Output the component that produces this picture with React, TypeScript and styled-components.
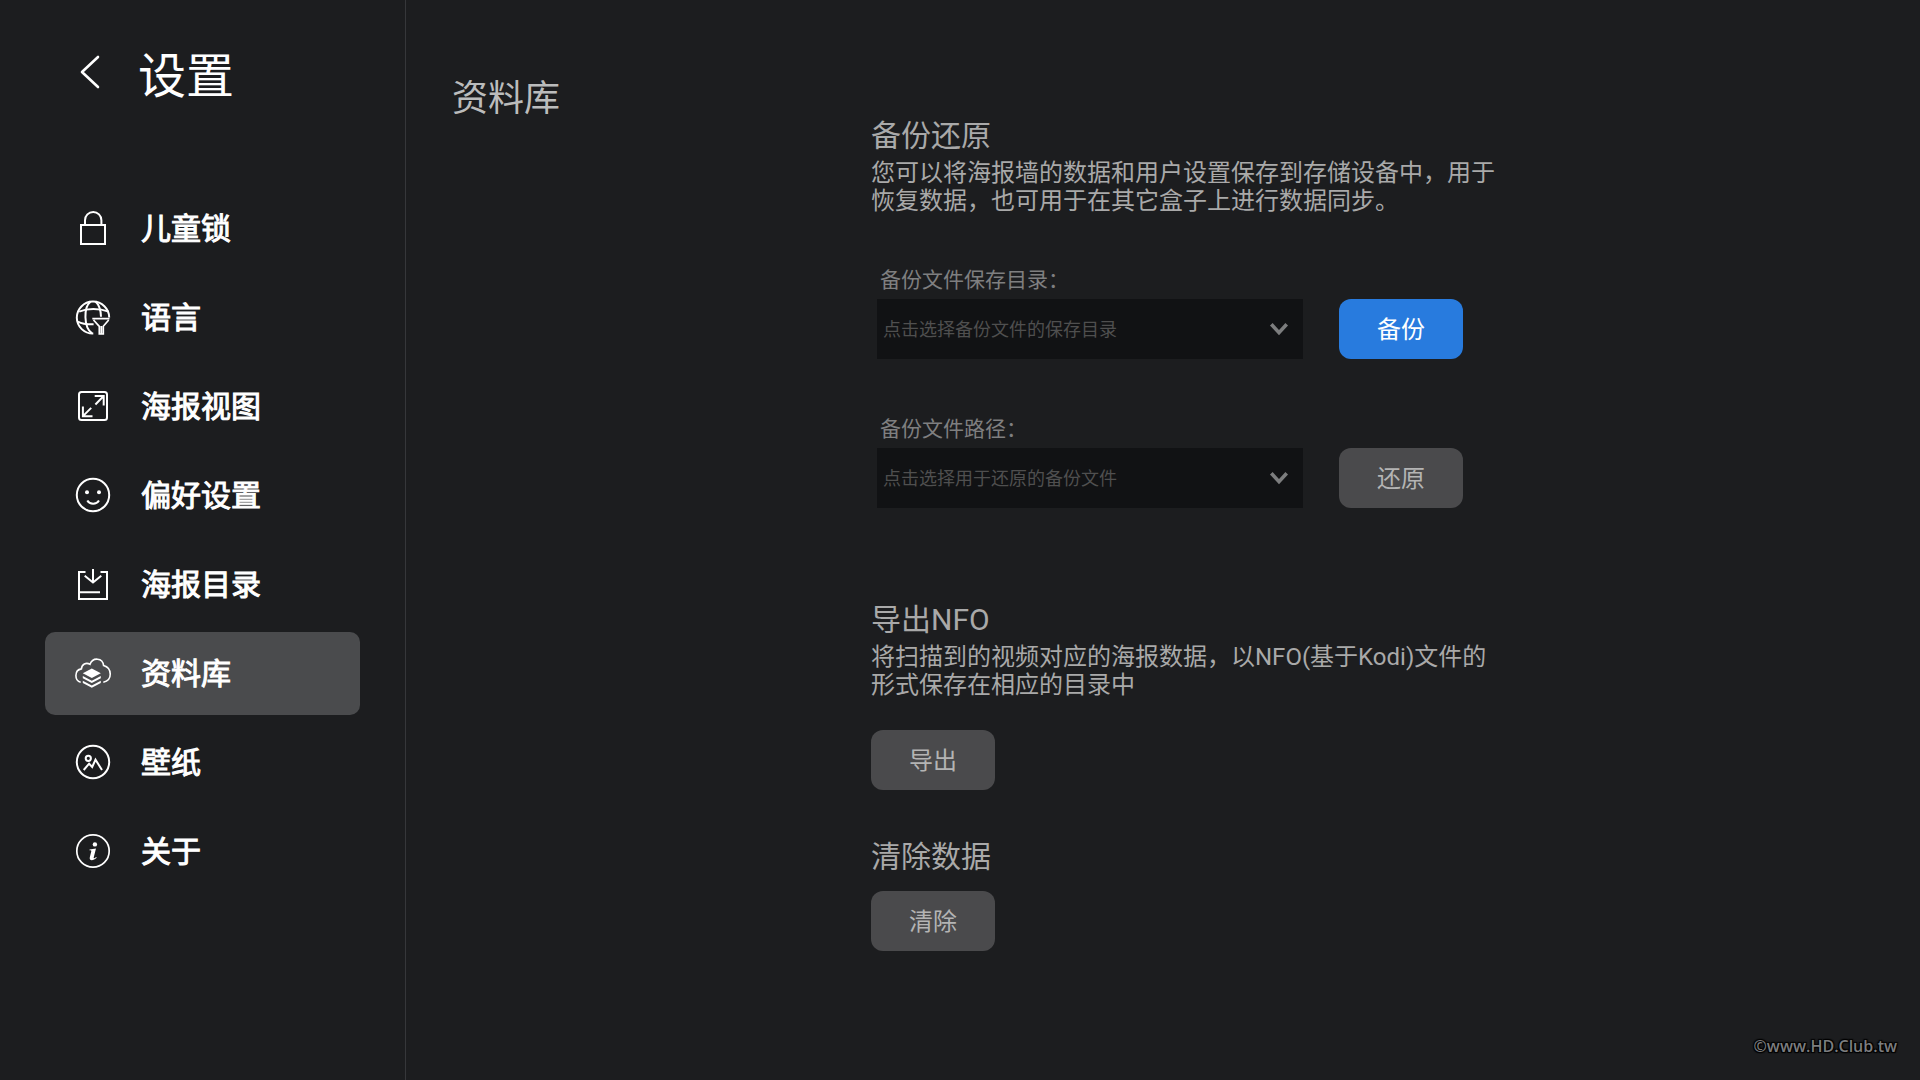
import React, { useState } from "react";
import styled, { createGlobalStyle } from "styled-components";

const GlobalStyle = createGlobalStyle`
  *, *::before, *::after { box-sizing: border-box; }
  body {
    margin: 0;
    background: #1c1d1f;
    color: #a9a9a9;
    font-family: Roboto, "Noto Sans CJK SC", sans-serif;
  }
  h1, h2, h3, p, ul { margin: 0; padding: 0; font-weight: 400; }
  button, select { font-family: inherit; }
`;

const Page = styled.div`
  position: relative;
  display: flex;
  min-height: 100vh;
`;

const Sidebar = styled.aside`
  flex: none;
  width: 406px;
  padding: 48px 45px;
  border-right: 1px solid #36373a;
`;

const SidebarHeader = styled.header`
  display: flex;
  align-items: flex-start;
  gap: 37px;
  padding-left: 34px;
  margin-bottom: 81px;
`;

const BackButton = styled.button`
  display: flex;
  align-items: center;
  height: 48px;
  padding: 0;
  border: 0;
  background: none;
  color: #fff;
  cursor: pointer;
`;

const SidebarTitle = styled.h1`
  font-size: 48px;
  line-height: 58px;
  color: #fff;
`;

const NavList = styled.ul`
  display: flex;
  flex-direction: column;
  gap: 6px;
  list-style: none;
`;

const NavLink = styled.a<{ $active: boolean }>`
  display: flex;
  align-items: center;
  gap: 29px;
  height: 83px;
  padding: 0 30px;
  border-radius: 10px;
  background: ${(p) => (p.$active ? "#4a4b4d" : "transparent")};
  color: #fff;
  font-size: 30px;
  line-height: 36px;
  text-decoration: none;
`;

const NavLabel = styled.span`
  padding-top: 1px;
  -webkit-text-stroke: 1px currentColor;
`;

const NavIcon = styled.svg`
  flex: none;
  width: 37px;
  height: 37px;
  fill: none;
  stroke: currentColor;
  stroke-width: 2;
`;

const Main = styled.main`
  flex: 1;
  display: grid;
  grid-template-columns: 419px minmax(0, 1fr);
  align-items: start;
  padding: 78px 46px;
`;

const PageTitle = styled.h2`
  font-size: 36px;
  line-height: 42px;
  color: #bbbcbc;
`;

const Sections = styled.div`
  padding-top: 40px;
`;

const Section = styled.section<{ $before?: number }>`
  margin-top: ${(p) => p.$before ?? 0}px;
`;

const SectionTitle = styled.h3`
  font-size: 30px;
  line-height: 36px;
`;

const Description = styled.p`
  max-width: 630px;
  margin-top: 5px;
  font-size: 24px;
  line-height: 28px;
`;

const Fields = styled.div`
  display: flex;
  flex-direction: column;
  gap: 56px;
  margin-top: 51px;
  padding-left: 6px;
`;

const FieldRow = styled.div`
  display: flex;
  align-items: flex-end;
  gap: 36px;
`;

const Field = styled.div`
  display: flex;
  flex-direction: column;
  gap: 5px;
  width: 426px;
`;

const FieldLabel = styled.label`
  padding-left: 3px;
  font-size: 21px;
  line-height: 28px;
  color: #7f7f80;
`;

const SelectBox = styled.div`
  display: grid;
  align-items: center;

  > * { grid-area: 1 / 1; }
`;

const Select = styled.select`
  width: 100%;
  height: 60px;
  padding: 0 60px 0 6px;
  border: 0;
  border-radius: 0;
  appearance: none;
  background: #111214;
  color: #4f4f4f;
  font-size: 18px;
`;

const SelectArrow = styled.svg`
  justify-self: end;
  width: 20px;
  height: 14px;
  margin-right: 14px;
  fill: none;
  stroke: #7c7d7e;
  stroke-width: 3.6;
  pointer-events: none;
`;

const ActionButton = styled.button<{ $primary?: boolean; $before?: number }>`
  display: block;
  width: 124px;
  height: 60px;
  margin-top: ${(p) => p.$before ?? 0}px;
  padding: 2px 0 0;
  border: 0;
  border-radius: 12px;
  background: ${(p) => (p.$primary ? "#287bde" : "#4a4a4c")};
  color: ${(p) => (p.$primary ? "#fff" : "#b4b4b4")};
  font-size: 24px;
  line-height: 28px;
  cursor: pointer;
`;

const Copyright = styled.footer`
  position: absolute;
  right: 23px;
  bottom: 22px;
  font-family: "Open Sans", "Noto Sans", sans-serif;
  font-size: 16px;
  font-weight: 600;
  line-height: 24px;
  color: #7c7d7f;
  text-shadow: 1px 1px 1px #000, -1px -1px 1px #000, 1px -1px 1px #000,
    -1px 1px 1px #000, 0 0 2px #000;
`;

const icons: Record<string, React.ReactNode> = {
  lock: (
    <>
      <rect x="6" y="15" width="24" height="19" />
      <path d="M10 14.5V10.2a8.2 8.2 0 0 1 16.4 0v4.3" />
    </>
  ),
  globe: (
    <>
      <path d="M34.2 18.5A16.2 16 0 1 0 18.3 34.6" />
      <path d="M15.500 2.600C8.500 8 8.500 28.500 17 34.400M20.500 2.600c3.300 3 5.300 8.500 5.500 15.200" />
      <path d="M4.200 12.600c8-3.400 20-3.400 29.400 0M2.900 22.600c4 2.200 9.500 2.800 15.700 2.700" />
      <path strokeWidth="1.700" d="M17.300 19.700h17.200M18.500 21l5.800 6.300V35h4v-7.700l5.400-6.300M26.300 27v8" />
    </>
  ),
  view: (
    <>
      <rect x="4" y="4" width="28" height="28" rx="2.500" />
      <path d="M19.700 7.900h9v9.600M28.400 8.200l-8 8.300M7.900 18.500v9.700h9.600M8.200 27.900l8-8" />
    </>
  ),
  smile: (
    <>
      <circle cx="18" cy="18" r="16.200" />
      <path d="M12.300 23.500c2.600 4.400 9 4.400 11.700 0" />
      <circle cx="12" cy="15.300" r="2" fill="currentColor" stroke="none" />
      <circle cx="24" cy="15.300" r="2" fill="currentColor" stroke="none" />
    </>
  ),
  folder: (
    <path d="M10.500 6H4v27h28V6h-6.500M18 3v13.500M9.700 9.800l8.300 6.700 8.300-6.700M4 26.300h21" />
  ),
  library: (
    <>
      <path
        strokeWidth="1.600"
        d="M5.700 27.200C-.6 25.500-1 15.200 6.400 13.900c.3-4.600 4.600-6.900 8.600-4.600 2.700-7.300 12.700-6.800 13.600 1.300 8.600 2.500 9.200 14.700-.3 16.600"
      />
      <g fill="currentColor" stroke="none">
        <path d="M16.800 13.600l9 4.700-9 4.700-9-4.700z" />
        <path d="M7.800 21l9 4.700 9-4.700v2.200l-9 4.700-9-4.700z" />
        <path d="M7.800 25.700l9 4.700 9-4.700v2.300l-9 4.700-9-4.700z" />
      </g>
    </>
  ),
  wallpaper: (
    <>
      <circle cx="18" cy="18" r="16.200" />
      <circle cx="13.300" cy="14.300" r="2.600" />
      <path d="M8.700 26l5.400-6.300 3.100 3.300 3.300-7.300L27 26" />
    </>
  ),
  about: (
    <>
      <circle cx="18" cy="18" r="16.200" strokeWidth="1.700" />
      <circle cx="19.900" cy="11.400" r="2.200" fill="currentColor" stroke="none" />
      <path fill="currentColor" stroke="none" d="M14.600 16.500l6.400-1-2.300 9c-.3 1.200.6 1.100 2.500-.4l.5.700c-3.400 3.200-7.800 3.200-6.900-.5l1.500-6c.2-.8-.4-1-2-1z" />
    </>
  ),
};

const menu = [
  { id: "lock", label: "儿童锁" },
  { id: "globe", label: "语言" },
  { id: "view", label: "海报视图" },
  { id: "smile", label: "偏好设置" },
  { id: "folder", label: "海报目录" },
  { id: "library", label: "资料库" },
  { id: "wallpaper", label: "壁纸" },
  { id: "about", label: "关于" },
];

interface PathFieldProps {
  id: string;
  label: string;
  placeholder: string;
  action: string;
  primary?: boolean;
}

function PathField({ id, label, placeholder, action, primary }: PathFieldProps) {
  return (
    <FieldRow>
      <Field>
        <FieldLabel htmlFor={id}>{label}</FieldLabel>
        <SelectBox>
          <Select id={id} defaultValue="">
            <option value="">{placeholder}</option>
          </Select>
          <SelectArrow viewBox="0 0 20 14" aria-hidden="true">
            <path d="M2.300 2.300L10 10.600l7.700-8.300" />
          </SelectArrow>
        </SelectBox>
      </Field>
      <ActionButton type="button" $primary={primary}>
        {action}
      </ActionButton>
    </FieldRow>
  );
}

export default function App() {
  const [active, setActive] = useState("library");

  return (
    <>
      <GlobalStyle />
      <Page lang="zh-CN">
        <Sidebar>
          <SidebarHeader>
            <BackButton type="button" aria-label="返回">
              <svg width="22" height="36" viewBox="0 0 22 36" fill="none" stroke="currentColor" strokeWidth="2.600" strokeLinecap="round" strokeLinejoin="round">
                <path d="M19 3L3 18l16 15" />
              </svg>
            </BackButton>
            <SidebarTitle>设置</SidebarTitle>
          </SidebarHeader>
          <nav>
            <NavList>
              {menu.map((item) => (
                <li key={item.id}>
                  <NavLink
                    href={`#${item.id}`}
                    $active={item.id === active}
                    aria-current={item.id === active ? "page" : undefined}
                    onClick={() => setActive(item.id)}
                  >
                    <NavIcon viewBox="0 0 37 37" aria-hidden="true">
                      {icons[item.id]}
                    </NavIcon>
                    <NavLabel>{item.label}</NavLabel>
                  </NavLink>
                </li>
              ))}
            </NavList>
          </nav>
        </Sidebar>
        <Main>
          <PageTitle>资料库</PageTitle>
          <Sections>
            <Section>
              <SectionTitle>备份还原</SectionTitle>
              <Description>
                您可以将海报墙的数据和用户设置保存到存储设备中，用于恢复数据，也可用于在其它盒子上进行数据同步。
              </Description>
              <Fields>
                <PathField
                  id="backup-dir"
                  label="备份文件保存目录："
                  placeholder="点击选择备份文件的保存目录"
                  action="备份"
                  primary
                />
                <PathField
                  id="restore-file"
                  label="备份文件路径："
                  placeholder="点击选择用于还原的备份文件"
                  action="还原"
                />
              </Fields>
            </Section>
            <Section $before={94}>
              <SectionTitle>导出NFO</SectionTitle>
              <Description>
                将扫描到的视频对应的海报数据，以NFO(基于Kodi)文件的形式保存在相应的目录中
              </Description>
              <ActionButton type="button" $before={31}>
                导出
              </ActionButton>
            </Section>
            <Section $before={49}>
              <SectionTitle>清除数据</SectionTitle>
              <ActionButton type="button" $before={16}>
                清除
              </ActionButton>
            </Section>
          </Sections>
        </Main>
        <Copyright>©www.HD.Club.tw</Copyright>
      </Page>
    </>
  );
}
